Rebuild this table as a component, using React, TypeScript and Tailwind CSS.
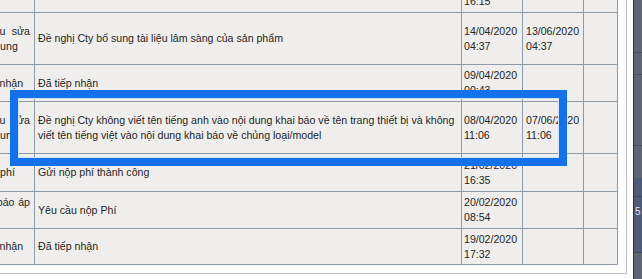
import React from "react";

type Row = {
  c1: React.ReactNode;
  c2: React.ReactNode;
  d1: [string, string] | null;
  d2: [string, string] | null;
};

const J = ({ words }: { words: string[] }) => (
  <div className="flex justify-between whitespace-nowrap">
    {words.map((w, i) => (
      <span key={i}>{w}</span>
    ))}
  </div>
);

const rows: Row[] = [
  { c1: <div>Hoàn thành</div>, c2: <div>Hoàn thành</div>, d1: ["15/04/2020", "16:15"], d2: null },
  {
    c1: (
      <>
        <J words={["Yêu", "cầu", "sửa"]} />
        <div className="whitespace-nowrap">đổi bổ sung</div>
      </>
    ),
    c2: <div className="whitespace-nowrap">Đề nghị Cty bổ sung tài liệu lâm sàng của sản phẩm</div>,
    d1: ["14/04/2020", "04:37"],
    d2: ["13/06/2020", "04:37"],
  },
  {
    c1: <div className="whitespace-nowrap">Đã tiếp nhận</div>,
    c2: <div>Đã tiếp nhận</div>,
    d1: ["09/04/2020", "00:43"],
    d2: null,
  },
  {
    c1: (
      <>
        <J words={["Yêu", "cầu", "sửa"]} />
        <div className="whitespace-nowrap">đổi bổ sung</div>
      </>
    ),
    c2: (
      <>
        <div className="whitespace-nowrap">
          Đề nghị Cty không viết tên tiếng anh vào nội dung khai báo về tên trang thiết bị và không
        </div>
        <div className="whitespace-nowrap">viết tên tiếng việt vào nội dung khai báo về chủng loại/model</div>
      </>
    ),
    d1: ["08/04/2020", "11:06"],
    d2: ["07/06/2020", "11:06"],
  },
  {
    c1: <div className="whitespace-nowrap">Đã nộp phí</div>,
    c2: <div>Gửi nộp phí thành công</div>,
    d1: ["21/02/2020", "16:35"],
    d2: null,
  },
  {
    c1: (
      <>
        <J words={["Thông", "báo", "áp"]} />
        <div>phí</div>
      </>
    ),
    c2: <div>Yêu cầu nộp Phí</div>,
    d1: ["20/02/2020", "08:54"],
    d2: null,
  },
  {
    c1: <div className="whitespace-nowrap">Đã tiếp nhận</div>,
    c2: <div>Đã tiếp nhận</div>,
    d1: ["19/02/2020", "17:32"],
    d2: null,
  },
];

const cell =
  "bg-[#efeeec] border-r border-b border-[#8d9aa8] flex flex-col justify-center overflow-hidden";

export default function App() {
  return (
    <div className="relative flex w-[642px] h-[279px] overflow-hidden bg-white font-['Liberation_Sans',Arial,sans-serif] text-[10.6px] leading-[15px] text-[#262626]">
      <div className="w-[627px] h-[274px] shrink-0 overflow-hidden border-r border-b border-[#bcbcbc]">
        <div className="mt-[-26px] ml-[-41px] w-[654px] grid grid-cols-[75px_427px_61px_61px_34px] grid-rows-[38px_52px_37px_52px_38px_37px_36px] border-l border-t border-[#8d9aa8]">
          {rows.map((r, i) => (
            <React.Fragment key={i}>
              <div className={`${cell} pl-[3px] pr-[4px]`}>{r.c1}</div>
              <div className={`${cell} pl-[3px]`}>{r.c2}</div>
              <div className={`${cell} pl-[2px]`}>
                {r.d1 && (
                  <>
                    <div>{r.d1[0]}</div>
                    <div>{r.d1[1]}</div>
                  </>
                )}
              </div>
              <div className={`${cell} pl-[3px]`}>
                {r.d2 && (
                  <>
                    <div>{r.d2[0]}</div>
                    <div>{r.d2[1]}</div>
                  </>
                )}
              </div>
              <div className={cell}></div>
            </React.Fragment>
          ))}
        </div>
      </div>
      <div className="w-[6px] shrink-0" />
      <div className="w-[9px] shrink-0 flex flex-col border-l border-[#28313b] bg-[#5f6672]">
        <div className="h-[53px] border-b border-[#4a505b]" />
        <div className="h-[22px] border-b border-[#4a505b]" />
        <div className="h-[71px] border-b border-[#4a505b]" />
        <div className="h-[32px]" />
        <div className="h-[19px] bg-[#4d5a78] border-b border-[#3e4a64]" />
        <div className="h-[56px] bg-[#4d5a78] border-b border-[#3e4a64] text-[#dfe3ea] text-[10px] leading-[30px] pl-[1px] overflow-hidden">5</div>
        <div className="flex-1" />
      </div>
      <div className="absolute left-[10px] top-[90px] w-[557px] h-[76px] border-[8px] border-[#1371ea] shadow-[inset_0_0_0_1px_#cfe2fa]" />
    </div>
  );
}
